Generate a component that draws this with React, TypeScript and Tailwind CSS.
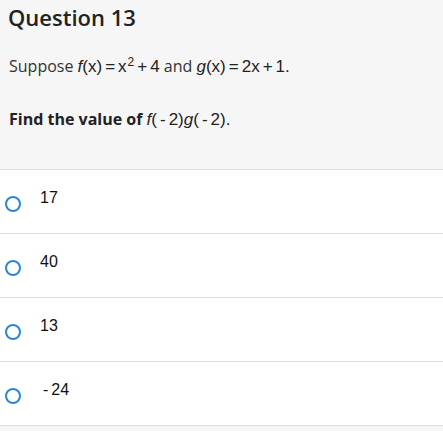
import React from 'react';

const options = ['17', '40', '13', '-24'];

const Radio = () => (
  <span className="mt-[26px] ml-[5px] block h-[16px] w-[16px] shrink-0 rounded-full border-2 border-[#2e86d4] bg-white" />
);

const Op = ({ c }: { c: string }) => <span className="mx-[3px]">{c}</span>;

const App: React.FC = () => {
  return (
    <div className="min-h-screen w-full bg-[#f6f6f6] font-['Open_Sans',sans-serif]">
      {/* question header */}
      <div className="h-[170px] border-b border-[#dedede] px-2 pt-[2px]">
        <h1 className="text-[22px] font-semibold leading-[30px] text-[#222]">Question 13</h1>
        <p className="mt-[23px] pl-px text-[16px] leading-[22px] text-[#333]">
          Suppose{' '}
          <span className="font-['Liberation_Sans',Arial,sans-serif] text-[17px] text-[#222]">
            <i>f</i>(x)<Op c="=" />x<sup className="ml-px text-[12px]">2</sup>
            <Op c="+" />4
          </span>{' '}
          and{' '}
          <span className="font-['Liberation_Sans',Arial,sans-serif] text-[17px] text-[#222]">
            <i>g</i>(x)<Op c="=" />2x<Op c="+" />1.
          </span>
        </p>
        <p className="mt-[30px] pl-px text-[16px] leading-[22px] text-[#222]">
          <span className="font-bold">Find the value of </span>
          <span className="font-['Liberation_Sans',Arial,sans-serif] text-[17px]">
            <i>f</i>(<Op c="-" />2)<i>g</i>(<Op c="-" />2).
          </span>
        </p>
      </div>

      {/* answer choices */}
      <div className="bg-white font-['Liberation_Sans',Arial,sans-serif]">
        {options.map((opt) => (
          <div key={opt} className="flex h-[64px] items-start border-b border-[#dedede]">
            <Radio />
            <span className="ml-[19px] pt-[18px] text-[16px] leading-[20px] text-[#111]">
              {opt.startsWith('-') ? (
                <>
                  <span className="ml-[3px] mr-[3px]">-</span>
                  {opt.slice(1)}
                </>
              ) : (
                opt
              )}
            </span>
          </div>
        ))}
      </div>
    </div>
  );
};

export default App;
